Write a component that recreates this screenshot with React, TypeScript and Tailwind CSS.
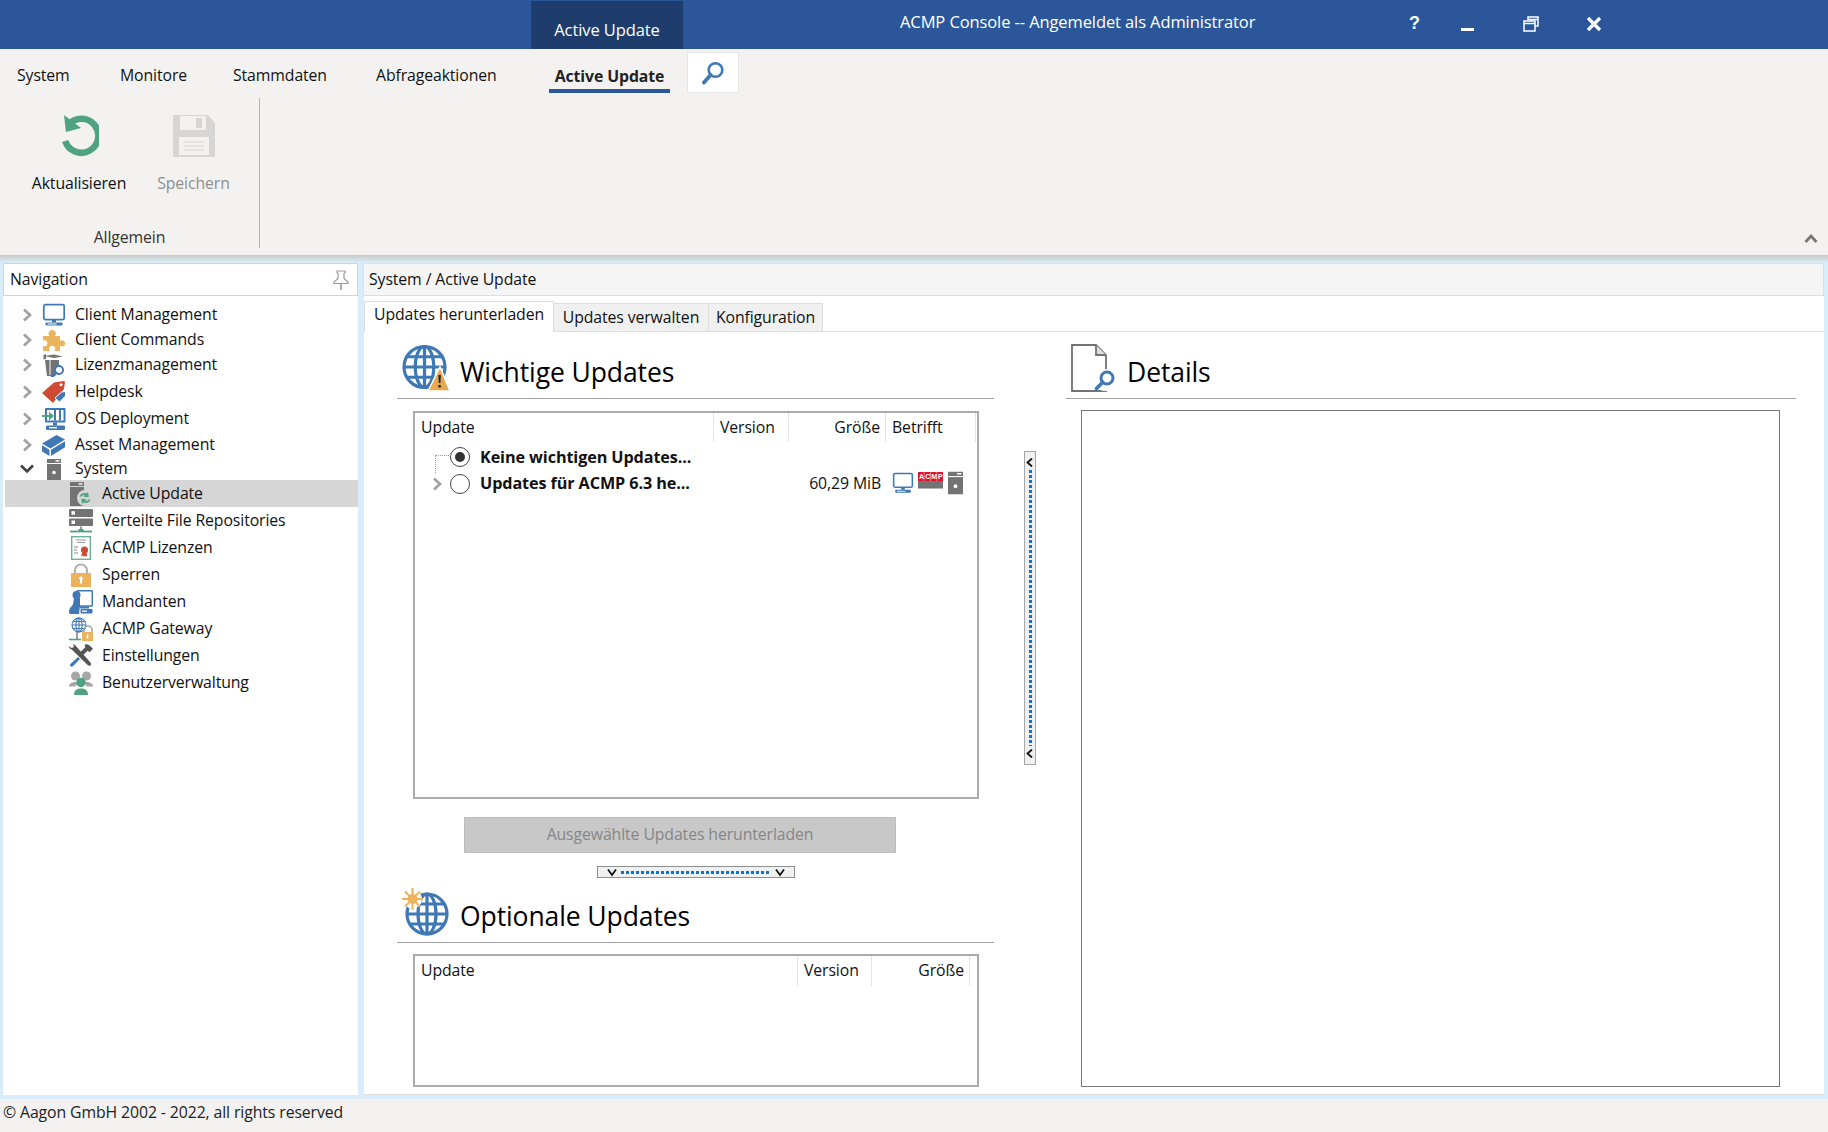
import React from "react";

const BLUE = "#3f78b5";
const GRAY = "#737373";
const GREEN = "#4fa381";
const ORANGE = "#ecb35f";

function Svg({ w, h, vb, children }: { w: number; h: number; vb?: string; children: React.ReactNode }) {
  return (
    <svg width={w} height={h} viewBox={vb ?? `0 0 ${w} ${h}`} fill="none" className="shrink-0 block">
      {children}
    </svg>
  );
}

const Monitor = ({ s = 24 }: { s?: number }) => (
  <Svg w={s} h={s} vb="0 0 24 24">
    <rect x="1.8" y="1.6" width="20.4" height="15" rx="1.5" fill="#fff" stroke={BLUE} strokeWidth="1.7" />
    <rect x="10" y="17" width="4" height="2.4" fill={BLUE} />
    <rect x="3.5" y="19.4" width="17" height="3.2" rx="1" fill={BLUE} />
    <rect x="5.5" y="20.5" width="9" height="1" fill="#fff" />
  </Svg>
);
const Puzzle = () => (
  <Svg w={24} h={24}>
    <path
      d="M1 8h6.5c-1-1.3-1.2-2.3-.8-3.4C7.2 3.200 8.500 2 10.200 2s3 1.200 3.500 2.600c.4 1.100.2 2.100-.8 3.400H18v5c1-.8 2-1 3-.6 1.300.5 2.200 1.700 2.200 3s-.9 2.500-2.200 3c-1 .4-2 .2-3-.6V23h-5.500c.9-1.100 1-2.200.6-3.200-.5-1.200-1.700-2-2.900-2s-2.400.8-2.900 2c-.4 1 -.2 2.100.6 3.200H1v-5.200c.9.5 1.900.6 2.800.1 1-.6 1.600-1.600 1.600-2.700s-.6-2.100-1.600-2.700c-.9-.5-1.900-.4-2.800.1z"
      fill={ORANGE}
    />
  </Svg>
);
const Magnifier = ({ cx, cy, r, w = 2 }: { cx: number; cy: number; r: number; w?: number }) => (
  <g>
    <circle cx={cx} cy={cy} r={r} fill="#fff" stroke={BLUE} strokeWidth={w} />
    <path d={`M${cx - r * 0.72} ${cy + r * 0.72}L${cx - r * 1.75} ${cy + r * 1.75}`} stroke={BLUE} strokeWidth={w + 0.6} strokeLinecap="round" />
  </g>
);
const Lizenz = () => (
  <Svg w={24} h={24}>
    <path d="M2 3l10-1.500 9 2-9 1.500z M3 7h14v9l-4 7H6.500L5 23z" fill={GRAY} />
    <path d="M1.500 2l2.500-1v5l-2.500 .5z" fill={GRAY} />
    <path d="M8 6v16" stroke="#fff" strokeWidth="1" />
    <Magnifier cx={17} cy={17} r={4} />
  </Svg>
);
const Helpdesk = () => (
  <Svg w={24} h={24}>
    <path d="M0 13L12 2.500 22 1l1 1-1 7L11 23z" fill="#cf4a32" />
    <circle cx="19" cy="4.800" r="1.500" fill="#fff" />
    <path d="M13 18l6.500-6 4-.5v4.500l-6 6z" fill={BLUE} stroke="#fff" strokeWidth="1" />
  </Svg>
);
const OSDeploy = () => (
  <Svg w={24} h={24}>
    <rect x="3" y="1" width="20.500" height="14.500" rx="1" fill={BLUE} />
    <rect x="5" y="3" width="16.500" height="10.500" fill="#fff" />
    <rect x="12" y="3" width="2" height="10.500" fill={BLUE} />
    <rect x="17" y="3" width="2" height="10.500" fill={BLUE} />
    <path d="M0 8h7V4.500L12 9l-5 4.500V10H0z" fill={GREEN} />
    <rect x="11" y="15.500" width="4" height="3" fill={BLUE} />
    <rect x="4" y="18.500" width="19" height="4.500" rx="1.200" fill={BLUE} />
    <rect x="7" y="20" width="8" height="1.400" fill="#fff" />
  </Svg>
);
const Asset = () => (
  <Svg w={24} h={21}>
    <path d="M0 8.500L14.500 0 23 4.500 8.500 13.500z" fill={BLUE} />
    <path d="M0 10.300l7.500 4.400V21L0 16.400z" fill={BLUE} />
    <path d="M9 14.800L23 6.300v6L9 21z" fill={BLUE} />
  </Svg>
);
const Tower = ({ w = 14, h = 21 }: { w?: number; h?: number }) => (
  <Svg w={w} h={h} vb="0 0 14 21">
    <rect x="0" y="0" width="14" height="4" fill={GRAY} />
    <rect x="8.500" y="1.200" width="4" height="1.400" fill="#fff" />
    <rect x="0" y="5" width="14" height="16" fill={GRAY} />
    <circle cx="7" cy="13.500" r="1.800" fill="#fff" />
  </Svg>
);
const ActiveUpd = () => (
  <Svg w={22} h={24}>
    <rect x="0" y="0" width="14" height="4" fill={GRAY} />
    <rect x="0" y="5" width="14" height="19" fill={GRAY} />
    <rect x="8.500" y="1.200" width="4" height="1.400" fill="#fff" />
    <circle cx="15" cy="16" r="8" fill="#d6d6d6" />
    <path d="M9.500 14.500c1-3 4-4.200 7-3l1.500-1.500.8 5.200-5.300-.5 1.300-1.300c-1.800-.6-3 0-3.700 1.400z" fill={GREEN} />
    <path d="M20.500 17.500c-1 3-4 4.200-7 3L12 22l-.8-5.200 5.300.5-1.300 1.300c1.800.6 3 0 3.700-1.400z" fill={GREEN} />
  </Svg>
);
const Repo = () => (
  <Svg w={24} h={24}>
    <rect x="0" y="0" width="24" height="8" rx="1" fill={GRAY} />
    <rect x="2.500" y="2.200" width="3.500" height="3.500" fill="#fff" />
    <rect x="0" y="9.500" width="24" height="7.500" rx="1" fill={GRAY} />
    <rect x="2.500" y="11.500" width="3.500" height="3.500" fill="#fff" />
    <path d="M1 22.500h22" stroke={GREEN} strokeWidth="1.800" />
    <path d="M12 17.500v4" stroke={GRAY} strokeWidth="1.500" />
    <rect x="9.500" y="20" width="5" height="2" fill={GREEN} />
  </Svg>
);
const Cert = () => (
  <Svg w={20} h={24}>
    <rect x=".7" y=".7" width="18.600" height="22.600" fill="#fff" stroke="#6fb196" strokeWidth="1.400" />
    <path d="M5 4h10M6 6.500h8" stroke="#999" strokeWidth="1" />
    <path d="M3 11h4M3 14h3M3 17h4" stroke="#888" strokeWidth="1" />
    <circle cx="13.500" cy="14" r="3.500" fill="#cf4a32" />
    <path d="M11 17l-1 3.500 2-1 1 1.500 1-1.500 1 1.500 1-1.500-.5-3z" fill="#cf4a32" />
  </Svg>
);
const Lock = () => (
  <Svg w={20} h={24}>
    <path d="M4 11V7.500a6 6 0 0 1 12 0V11" stroke="#b3b3b3" strokeWidth="2.200" />
    <rect x="0" y="10" width="20" height="14" fill={ORANGE} />
    <circle cx="10" cy="15.300" r="1.800" fill="#fff" />
    <rect x="9" y="15.500" width="2" height="5" fill="#fff" />
  </Svg>
);
const Mandant = () => (
  <Svg w={24} h={24}>
    <rect x="8" y=".7" width="15.300" height="15.300" rx="1" fill="#fff" stroke={BLUE} strokeWidth="1.500" />
    <circle cx="7.500" cy="5" r="4" fill={BLUE} />
    <path d="M5 8h6v8l-1 8H1.500C0 24 0 22 0 21c.5-4 3-4 4-7z" fill={BLUE} />
    <rect x="11" y="16.500" width="9" height="2" fill={BLUE} />
    <rect x="11.500" y="19" width="12" height="4.500" rx="1" fill={BLUE} />
    <rect x="13" y="20.500" width="5" height="1.300" fill="#fff" />
  </Svg>
);
const GlobeLines = ({ cx, cy, r, w }: { cx: number; cy: number; r: number; w: number }) => (
  <g stroke={BLUE} strokeWidth={w} fill="none">
    <circle cx={cx} cy={cy} r={r} />
    <ellipse cx={cx} cy={cy} rx={r * 0.45} ry={r} />
    <path d={`M${cx} ${cy - r}V${cy + r}M${cx - r} ${cy}H${cx + r}M${cx - r * 0.87} ${cy - r * 0.5}H${cx + r * 0.87}M${cx - r * 0.87} ${cy + r * 0.5}H${cx + r * 0.87}`} />
  </g>
);
const Gateway = () => (
  <Svg w={24} h={24}>
    <GlobeLines cx={10} cy={8} r={7} w={1.100} />
    <path d="M0 22.500h12" stroke={GREEN} strokeWidth="1.600" />
    <path d="M8 15v7" stroke={GRAY} strokeWidth="1.400" />
    <path d="M15 15v-2a4 4 0 0 1 8 0v2" stroke="#aaa" strokeWidth="1.600" />
    <rect x="13" y="15" width="11" height="9" fill={ORANGE} />
    <rect x="17.700" y="17.500" width="1.600" height="4" fill="#fff" />
  </Svg>
);
const Tools = () => (
  <Svg w={24} h={23}>
    <path d="M6 1L21 18c1.200 1.400 1.500 2.400.6 3.300-.9.9-2 .6-3.200-.6L2.700 5.500C1 5.500 0 3 0 2l2.500 2L5 3 4 .5C5 .3 5.500.5 6 1z" fill="#555" />
    <path d="M9 13L1.500 20c-.8.8-.5 1.800 0 2.300s1.500.7 2.300 0L11 15z" fill={BLUE} />
    <path d="M11.500 8l5-5c-1-1-1-2-.3-2.500 2-.7 4 .5 5.500 2l2.300 2.300-3.500 3.500-1.800-1.500L13 12z" fill="#555" />
  </Svg>
);
const Users = () => (
  <Svg w={24} h={24}>
    <circle cx="6.500" cy="5" r="4.500" fill="#a6a6a6" />
    <circle cx="17.500" cy="5" r="4.500" fill="#a6a6a6" />
    <path d="M0 15.500c0-3 3-4.500 6.500-4.500 1.500 0 2.500.5 3 1-2 1-3 2.500-3 3.500z" fill="#a6a6a6" />
    <path d="M24 15.500c0-3-3-4.500-6.500-4.500-1.500 0-2.500.5-3 1 2 1 3 2.500 3 3.500z" fill="#a6a6a6" />
    <circle cx="12" cy="11.500" r="4.700" fill={GREEN} />
    <path d="M5 24c0-4 2-6.500 7-6.500s7 2.500 7 6.500z" fill={GREEN} />
  </Svg>
);
const Acmp = () => (
  <Svg w={25} h={17}>
    <rect x="0" y="0" width="25" height="9" fill="#e0122c" />
    <path d="M6.200 0v9M12.500 0v9M18.800 0v9" stroke="#e8a0a8" strokeWidth=".7" />
    <text y="7.200" fontSize="7" fontWeight="700" fill="#fff" fontFamily="Liberation Sans, sans-serif">
      <tspan x="1">A</tspan>
      <tspan x="7.300">C</tspan>
      <tspan x="13.200">M</tspan>
      <tspan x="20">P</tspan>
    </text>
    <rect x="0" y="9" width="25" height="7" fill={GRAY} />
    <rect x="0" y="16" width="25" height="1" fill="#b5b5b5" />
  </Svg>
);

const GlobeWarn = () => (
  <Svg w={48} h={48}>
    <GlobeLines cx={22.500} cy={23} r={20.500} w={3.200} />
    <path d="M38 23L48 47H26z" fill="#e8a851" stroke="#fff" strokeWidth="1.500" />
    <path d="M36.300 31h2.600l-.5 8h-1.600z M36.400 41h2.400v2.500h-2.400z" fill="#222" />
  </Svg>
);
const GlobeStar = () => (
  <Svg w={48} h={48}>
    <GlobeLines cx={25} cy={26} r={20} w={3.200} />
    <circle cx="10.500" cy="11" r="9.500" fill="#fff" />
    <path d="M10.500 0v22M0 11h21M3 3.500l15 15M18 3.500l-15 15" stroke={ORANGE} strokeWidth="2" />
    <circle cx="10.500" cy="11" r="5" fill={ORANGE} />
  </Svg>
);
const DocSearch = () => (
  <Svg w={46} h={48}>
    <path d="M1 1h24l10 10v36H1z" fill="#fff" stroke={GRAY} strokeWidth="1.800" />
    <path d="M25 1v10h10" fill="#ddd" stroke={GRAY} strokeWidth="1.800" />
    <circle cx="34" cy="36" r="11" fill="#fff" />
    <Magnifier cx={36} cy={34} r={6} w={3} />
  </Svg>
);

const Refresh = () => (
  <Svg w={40} h={42}>
    <path d="M9.500 9.700A17 17 0 1 1 6.200 26" stroke={GREEN} strokeWidth="6.500" strokeLinecap="butt" />
    <path d="M5 0l2 17 15-4z" fill={GREEN} />
  </Svg>
);
const Floppy = () => (
  <Svg w={42} h={42}>
    <path d="M1 0h34l7 8v33a1 1 0 0 1-1 1H1a1 1 0 0 1-1-1V1a1 1 0 0 1 1-1z" fill="#d6d6d6" />
    <rect x="7" y="1" width="26" height="14" fill="#f3f2f1" />
    <rect x="23" y="3" width="6" height="10" fill="#d6d6d6" />
    <rect x="6" y="22" width="30" height="18" fill="#f3f2f1" />
    <path d="M11 27h20M11 31h20M11 35h20" stroke="#d6d6d6" strokeWidth="1" />
  </Svg>
);
const Search = () => (
  <Svg w={24} h={24}>
    <circle cx="14.500" cy="9" r="6.800" stroke={BLUE} strokeWidth="2.600" fill="#fff" />
    <path d="M9.500 14L3 21.500" stroke={BLUE} strokeWidth="3.800" strokeLinecap="round" />
  </Svg>
);
const Pin = () => (
  <Svg w={18} h={20}>
    <path d="M5 1h8v1.500l-1 1v5l4 3.500v1.500H2V12l4-3.500v-5l-1-1z" fill="#fff" stroke="#9a9a9a" strokeWidth="1.200" />
    <path d="M9 14v6" stroke="#9a9a9a" strokeWidth="1.600" />
  </Svg>
);

const ChevR = ({ color = "#a3a3a3", w = 2.800 }: { color?: string; w?: number }) => (
  <Svg w={10} h={14}>
    <path d="M2 1.500L8 7l-6 5.500" stroke={color} strokeWidth={w} />
  </Svg>
);
const ChevD = () => (
  <Svg w={14} h={10}>
    <path d="M1 1.500L7 7.500l6-6" stroke="#404040" strokeWidth="2.600" />
  </Svg>
);
const MiniChev = ({ dir }: { dir: "left" | "down" }) => (
  <Svg w={10} h={9}>
    <path d={dir === "down" ? "M1 1.500L5 7l4-5.500" : "M7 .5L2.500 4.500 7 8.500"} stroke="#111" strokeWidth="1.800" />
  </Svg>
);

type Row = { label: string; icon: React.ReactNode; h: string; sel?: boolean };
const top: Row[] = [
  { label: "Client Management", icon: <Monitor />, h: "h-[25px]" },
  { label: "Client Commands", icon: <Puzzle />, h: "h-[25px]" },
  { label: "Lizenzmanagement", icon: <Lizenz />, h: "h-[26px]" },
  { label: "Helpdesk", icon: <Helpdesk />, h: "h-[27px]" },
  { label: "OS Deployment", icon: <OSDeploy />, h: "h-[27px]" },
  { label: "Asset Management", icon: <Asset />, h: "h-[26px]" },
];
const kids: Row[] = [
  { label: "Active Update", icon: <ActiveUpd />, h: "h-[27px]", sel: true },
  { label: "Verteilte File Repositories", icon: <Repo />, h: "h-[27px]" },
  { label: "ACMP Lizenzen", icon: <Cert />, h: "h-[27px]" },
  { label: "Sperren", icon: <Lock />, h: "h-[27px]" },
  { label: "Mandanten", icon: <Mandant />, h: "h-[27px]" },
  { label: "ACMP Gateway", icon: <Gateway />, h: "h-[27px]" },
  { label: "Einstellungen", icon: <Tools />, h: "h-[27px]" },
  { label: "Benutzerverwaltung", icon: <Users />, h: "h-[27px]" },
];

const HeadCell = ({ w, right, children }: { w: string; right?: boolean; children?: React.ReactNode }) => (
  <div className={`${w} h-full shrink-0 flex items-center border-r border-[#e3e3e3] ${right ? "justify-end pr-[5px]" : "pl-[6px]"}`}>{children}</div>
);

const SectionHead = ({ icon, title, cls }: { icon: React.ReactNode; title: string; cls: string }) => (
  <div className={`${cls} flex items-end border-b border-[#a0a0a0] pb-[6px] pl-[5px]`}>
    {icon}
    <div className="ml-[10px] mb-[3px] text-[26.5px] leading-[34px] text-black">{title}</div>
  </div>
);

const menu = [
  { t: "System", cls: "ml-[17px] w-[103px]" },
  { t: "Monitore", cls: "w-[113px]" },
  { t: "Stammdaten", cls: "w-[143px]" },
  { t: "Abfrageaktionen", cls: "w-[170px]" },
];

export default function App() {
  return (
    <div className="w-[1828px] h-[1132px] flex flex-col overflow-hidden bg-[#f3f2f1] text-[15.8px] text-[#111] font-['Open_Sans',sans-serif] tracking-[-0.1px]">
      {/* title bar */}
      <div className="h-[49px] shrink-0 flex bg-[#2b579a] text-white">
        <div className="ml-[531px] mt-px w-[152px] h-[48px] bg-[#1e3d6c] flex items-center justify-center pt-[11px] text-[16.5px]">Active Update</div>
        <div className="ml-[217px] w-[500px] flex items-center pb-[5px] text-[16.5px]">ACMP Console -- Angemeldet als Administrator</div>
        <div className="flex flex-1 items-center pb-[1px] text-white">
          <div className="w-[63px] ml-[-30px] text-center font-bold text-[18px] font-['Liberation_Sans',sans-serif] pb-[2px] pl-[26px]">?</div>
          <div className="w-[63px] flex justify-center pt-[6px] pl-[6px]">
            <div className="w-[13px] h-[3px] bg-white mt-[5px]" />
          </div>
          <div className="w-[63px] flex justify-center pl-[6px]">
            <Svg w={16} h={16}>
              <path d="M5 4V1h10v9h-3M5 3.500h10" stroke="#fff" strokeWidth="1.500" />
              <rect x="1" y="5" width="11" height="10" stroke="#fff" strokeWidth="1.500" />
              <path d="M1 7.500h11" stroke="#fff" strokeWidth="1.500" />
            </Svg>
          </div>
          <div className="w-[63px] flex justify-center pl-[6px]">
            <Svg w={16} h={16}>
              <path d="M2 2l12 12M14 2L2 14" stroke="#fff" strokeWidth="3.200" />
            </Svg>
          </div>
        </div>
      </div>

      {/* ribbon */}
      <div className="h-[206px] shrink-0 flex flex-col relative">
        <div className="h-[47px] shrink-0 flex">
          <div className="flex items-start pt-[15px]">
            {menu.map((m) => (
              <div key={m.t} className={m.cls}>{m.t}</div>
            ))}
          </div>
          <div className="ml-[3px] w-[121px] h-[44px] shrink-0 flex flex-col items-center pt-[15px]">
            <div className="font-bold leading-[24px] text-[#222] whitespace-nowrap">Active Update</div>
            <div className="mt-[1px] w-[121px] h-[5px] bg-[#2b579a]" />
          </div>
          <div className="ml-[17px] mt-[3px] w-[52px] h-[41px] bg-white border border-[#e6e6e6] flex items-center justify-center">
            <Search />
          </div>
        </div>
        <div className="flex flex-1 pt-[2px]">
          <div className="w-[260px] h-[150px] border-r border-[#b5b5b5] flex flex-col">
            <div className="flex pt-[17px] h-[129px]">
              <div className="ml-[29px] w-[100px] flex flex-col items-center">
                <Refresh />
                <div className="mt-[15px] leading-[22px]">Aktualisieren</div>
              </div>
              <div className="ml-[26px] w-[77px] flex flex-col items-center">
                <Floppy />
                <div className="mt-[15px] leading-[22px] text-[#8f8f8f]">Speichern</div>
              </div>
            </div>
            <div className="text-center leading-[22px] text-[#333]">Allgemein</div>
          </div>
        </div>
        <div className="absolute right-[10px] bottom-[11px]">
          <Svg w={14} h={10}>
            <path d="M1.500 8L7 2l5.500 6" stroke="#777" strokeWidth="2.800" />
          </Svg>
        </div>
      </div>

      {/* shadow strip */}
      <div className="h-[8px] shrink-0 bg-gradient-to-b from-[#c9c8c6] to-[#dbeefb]" />

      {/* main */}
      <div className="flex-1 min-h-0 flex bg-[#d9ecfa] pb-[4px]">
        {/* navigation */}
        <div className="ml-[3px] w-[355px] shrink-0 flex flex-col bg-white">
          <div className="h-[33px] shrink-0 flex items-center justify-between border border-[#d4d4d4] pl-[6px] pr-[7px]">
            <span>Navigation</span>
            <Pin />
          </div>
          <div className="flex-1 pt-[6px] pl-[2px]">
            {top.map((r) => (
              <div key={r.label} className={`${r.h} flex items-center`}>
                <div className="w-[17px]" />
                <ChevR />
                <div className="w-[10px]" />
                <div className="w-[24px] flex justify-center">{r.icon}</div>
                <div className="ml-[9px]">{r.label}</div>
              </div>
            ))}
            <div className="h-[22px] flex items-center">
              <div className="w-[15px]" />
              <ChevD />
              <div className="w-[8px]" />
              <div className="w-[24px] flex justify-center"><Tower /></div>
              <div className="ml-[9px]">System</div>
            </div>
            {kids.map((r) => (
              <div key={r.label} className={`${r.h} flex items-center pl-[64px] ${r.sel ? "bg-[#d6d6d6]" : ""}`}>
                <div className="w-[24px] flex justify-center">{r.icon}</div>
                <div className="ml-[9px]">{r.label}</div>
              </div>
            ))}
          </div>
        </div>

        {/* splitter gap */}
        <div className="w-[6px] shrink-0" />

        {/* content */}
        <div className="w-[1460px] shrink-0 flex flex-col bg-white border-b border-[#dcdcdc]">
          <div className="h-[33px] shrink-0 flex items-center bg-[#f5f5f5] border border-[#dedede] pl-[5px] ml-[-1px]">System / Active Update</div>
          <div className="h-[36px] shrink-0 flex items-end border-b border-[#dedede]">
            <div className="w-[190px] h-[31px] flex items-center justify-center bg-white border border-b-0 border-[#dedede] mb-[-1px] pb-[4px]">Updates herunterladen</div>
            <div className="w-[155px] h-[28px] flex items-center justify-center bg-[#f0f0f0] border-r border-t border-[#dedede]">Updates verwalten</div>
            <div className="w-[114px] h-[28px] flex items-center justify-center bg-[#f0f0f0] border-r border-t border-[#dedede]">Konfiguration</div>
          </div>
          <div className="flex-1 min-h-0 flex">
            {/* left column */}
            <div className="w-[660px] shrink-0 flex flex-col">
              <SectionHead icon={<GlobeWarn />} title="Wichtige Updates" cls="ml-[33px] w-[597px] h-[67px]" />
              <div className="ml-[49px] mt-[12px] w-[566px] h-[388px] border-2 border-[#ababab] flex flex-col">
                <div className="h-[29px] shrink-0 flex">
                  <HeadCell w="w-[299px]">Update</HeadCell>
                  <HeadCell w="w-[75px]">Version</HeadCell>
                  <HeadCell w="w-[97px]" right>Größe</HeadCell>
                  <HeadCell w="w-[90px]">Betrifft</HeadCell>
                </div>
                <div className="relative h-[26px] mt-[2px] flex items-center">
                  <div className="absolute left-[20px] top-[11px] w-[16px] h-[18px] border-l border-t border-dotted border-[#999]" />
                  <div className="ml-[35px] w-[20px] h-[20px] rounded-full border border-[#444] bg-white flex items-center justify-center">
                    <div className="w-[10px] h-[10px] rounded-full bg-[#333]" />
                  </div>
                  <div className="ml-[10px] font-bold text-[16.2px] text-[#111]">Keine wichtigen Updates...</div>
                </div>
                <div className="h-[27px] flex items-center">
                  <div className="ml-[17px] w-[18px]"><ChevR /></div>
                  <div className="w-[20px] h-[20px] rounded-full border border-[#444] bg-white" />
                  <div className="ml-[10px] w-[227px] font-bold text-[16.2px] text-[#111]">Updates für ACMP 6.3 he...</div>
                  <div className="w-[174px] text-right whitespace-nowrap">60,29 MiB</div>
                  <div className="ml-[11px] flex items-start gap-[4px]">
                    <Monitor s={22} />
                    <Acmp />
                    <div className="ml-[1px] mt-[-1px]"><Tower w={15} h={24} /></div>
                  </div>
                </div>
              </div>
              <div className="ml-[100px] mt-[18px] w-[432px] h-[36px] flex items-center justify-center bg-[#c8c8c8] border border-[#bcbcbc] text-[#868686]">Ausgewählte Updates herunterladen</div>
              <div className="ml-[233px] mt-[13px] w-[198px] h-[12px] flex items-center justify-center gap-[4px] bg-[#f0f0f0] border border-[#8f8f8f]">
                <MiniChev dir="down" />
                <div className="w-[150px] h-[3px] bg-[radial-gradient(#0078d7_60%,transparent_60%)] bg-[length:5px_3px] bg-[repeating-linear-gradient(90deg,#0078d7_0,#0078d7_3px,transparent_3px,transparent_5px)]" />
                <MiniChev dir="down" />
              </div>
              <SectionHead icon={<GlobeStar />} title="Optionale Updates" cls="ml-[33px] w-[597px] h-[65px]" />
              <div className="ml-[49px] mt-[11px] w-[566px] h-[133px] border-2 border-[#ababab]">
                <div className="h-[30px] flex">
                  <HeadCell w="w-[383px]">Update</HeadCell>
                  <HeadCell w="w-[74px]">Version</HeadCell>
                  <HeadCell w="w-[98px]" right>Größe</HeadCell>
                </div>
              </div>
            </div>

            {/* vertical splitter */}
            <div className="w-[12px] shrink-0 mt-[119px] h-[314px] flex flex-col items-center justify-between py-[6px] bg-[#f0f0f0] border border-[#a6a6a6]">
              <MiniChev dir="left" />
              <div className="w-[3px] flex-1 my-[3px] bg-[repeating-linear-gradient(180deg,#0078d7_0,#0078d7_3px,transparent_3px,transparent_5px)]" />
              <MiniChev dir="left" />
            </div>

            {/* details */}
            <div className="flex-1 flex flex-col">
              <SectionHead icon={<DocSearch />} title="Details" cls="ml-[30px] w-[730px] h-[67px]" />
              <div className="ml-[45px] mt-[11px] w-[699px] h-[677px] border border-[#777] bg-white" />
            </div>
          </div>
        </div>
      </div>

      {/* status */}
      <div className="h-[33px] shrink-0 flex items-center pl-[3px] pb-[6px] text-[#222]">© Aagon GmbH 2002 - 2022, all rights reserved</div>
    </div>
  );
}
